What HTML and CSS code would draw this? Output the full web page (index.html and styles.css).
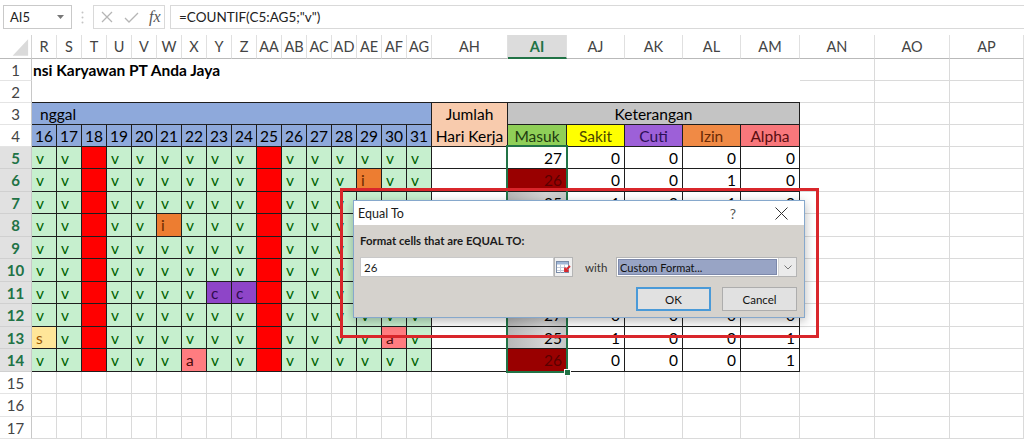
FILE: index.html
```html
<!DOCTYPE html>
<html lang="id">
<head>
<meta charset="utf-8">
<title>Absensi Karyawan PT Anda Jaya - Equal To</title>
<link rel="stylesheet" href="styles.css">
</head>
<body>
<header class="formula-bar">
  <div class="name-box"><span>AI5</span><svg width="7" height="4" viewBox="0 0 7 4"><path d="M0 0h7L3.5 4z" fill="#777"/></svg></div>
  <div class="splitter"><svg width="3" height="13" viewBox="0 0 3 13"><circle cx="1.5" cy="1.5" r="1" fill="#c4c4c4"/><circle cx="1.5" cy="6.5" r="1" fill="#c4c4c4"/><circle cx="1.5" cy="11.5" r="1" fill="#c4c4c4"/></svg></div>
  <div class="fn-box">
    <svg class="fn-x" width="12" height="12" viewBox="0 0 12 12"><path d="M1 1L11 11M11 1L1 11" stroke="#b5b5b5" stroke-width="1.3" fill="none"/></svg>
    <svg class="fn-ok" width="15" height="11" viewBox="0 0 15 11"><path d="M1 6L5 10L14 1" stroke="#b5b5b5" stroke-width="1.3" fill="none"/></svg>
    <span class="fx">fx</span>
  </div>
  <div class="formula">=COUNTIF(C5:AG5;"v")</div>
</header>

<main class="sheet">
  <div class="corner"><svg width="32" height="24" viewBox="0 0 32 24"><path d="M29 4V21H13z" fill="#dadada"/></svg></div>
  <div class="ch">R</div><div class="ch">S</div><div class="ch">T</div><div class="ch">U</div><div class="ch">V</div><div class="ch">W</div><div class="ch">X</div><div class="ch">Y</div><div class="ch">Z</div><div class="ch">AA</div><div class="ch">AB</div><div class="ch">AC</div><div class="ch">AD</div><div class="ch">AE</div><div class="ch">AF</div><div class="ch">AG</div><div class="ch">AH</div><div class="ch sel">AI</div><div class="ch">AJ</div><div class="ch">AK</div><div class="ch">AL</div><div class="ch">AM</div><div class="ch">AN</div><div class="ch">AO</div><div class="ch">AP</div>

  <div class="rh">1</div><div class="title">nsi Karyawan PT Anda Jaya</div><div class="c"></div><div class="c"></div><div class="c"></div>

  <div class="rh">2</div><div class="blank"></div><div class="c"></div><div class="c"></div><div class="c"></div>

  <div class="rh">3</div><div class="t tgl">nggal</div><div class="t jumlah"><span>Jumlah</span><span>Hari Kerja</span></div><div class="t ket">Keterangan</div><div class="c"></div><div class="c"></div><div class="c"></div>

  <div class="rh">4</div>
  <div class="t day">16</div><div class="t day">17</div><div class="t day">18</div><div class="t day">19</div><div class="t day">20</div><div class="t day">21</div><div class="t day">22</div><div class="t day">23</div><div class="t day">24</div><div class="t day">25</div><div class="t day">26</div><div class="t day">27</div><div class="t day">28</div><div class="t day">29</div><div class="t day">30</div><div class="t day">31</div>
  <div class="t hd masuk">Masuk</div><div class="t hd sakit">Sakit</div><div class="t hd cuti">Cuti</div><div class="t hd izin">Izin</div><div class="t hd alpha">Alpha</div>
  <div class="c"></div><div class="c"></div><div class="c"></div>

  <div class="rh sel">5</div>
  <div class="t v">v</div><div class="t v">v</div><div class="t r"></div><div class="t v">v</div><div class="t v">v</div><div class="t v">v</div><div class="t v">v</div><div class="t v">v</div><div class="t v">v</div><div class="t r"></div><div class="t v">v</div><div class="t v">v</div><div class="t v">v</div><div class="t v">v</div><div class="t v">v</div><div class="t v">v</div>
  <div class="t"></div><div class="t n">27</div><div class="t n">0</div><div class="t n">0</div><div class="t n">0</div><div class="t n">0</div>
  <div class="c"></div><div class="c"></div><div class="c"></div>

  <div class="rh sel">6</div>
  <div class="t v">v</div><div class="t v">v</div><div class="t r"></div><div class="t v">v</div><div class="t v">v</div><div class="t v">v</div><div class="t v">v</div><div class="t v">v</div><div class="t v">v</div><div class="t r"></div><div class="t v">v</div><div class="t v">v</div><div class="t v">v</div><div class="t o">i</div><div class="t v">v</div><div class="t v">v</div>
  <div class="t"></div><div class="t n hit">26</div><div class="t n">0</div><div class="t n">0</div><div class="t n">1</div><div class="t n">0</div>
  <div class="c"></div><div class="c"></div><div class="c"></div>

  <div class="rh sel">7</div>
  <div class="t v">v</div><div class="t v">v</div><div class="t r"></div><div class="t v">v</div><div class="t v">v</div><div class="t v">v</div><div class="t v">v</div><div class="t v">v</div><div class="t v">v</div><div class="t r"></div><div class="t v">v</div><div class="t v">v</div><div class="t v">v</div><div class="t v">v</div><div class="t v">v</div><div class="t v">v</div>
  <div class="t"></div><div class="t n tint">25</div><div class="t n">1</div><div class="t n">0</div><div class="t n">1</div><div class="t n">0</div>
  <div class="c"></div><div class="c"></div><div class="c"></div>

  <div class="rh sel">8</div>
  <div class="t v">v</div><div class="t v">v</div><div class="t r"></div><div class="t v">v</div><div class="t v">v</div><div class="t o">i</div><div class="t v">v</div><div class="t v">v</div><div class="t v">v</div><div class="t r"></div><div class="t v">v</div><div class="t v">v</div><div class="t v">v</div><div class="t v"></div><div class="t v"></div><div class="t v"></div>
  <div class="t"></div><div class="t n tint"></div><div class="t n"></div><div class="t n"></div><div class="t n"></div><div class="t n"></div>
  <div class="c"></div><div class="c"></div><div class="c"></div>

  <div class="rh sel">9</div>
  <div class="t v">v</div><div class="t v">v</div><div class="t r"></div><div class="t v">v</div><div class="t v">v</div><div class="t v">v</div><div class="t v">v</div><div class="t v">v</div><div class="t v">v</div><div class="t r"></div><div class="t v">v</div><div class="t v">v</div><div class="t v">v</div><div class="t v"></div><div class="t v"></div><div class="t v"></div>
  <div class="t"></div><div class="t n tint"></div><div class="t n"></div><div class="t n"></div><div class="t n"></div><div class="t n"></div>
  <div class="c"></div><div class="c"></div><div class="c"></div>

  <div class="rh sel">10</div>
  <div class="t v">v</div><div class="t v">v</div><div class="t r"></div><div class="t v">v</div><div class="t v">v</div><div class="t v">v</div><div class="t v">v</div><div class="t v">v</div><div class="t v">v</div><div class="t r"></div><div class="t v">v</div><div class="t v">v</div><div class="t v">v</div><div class="t v"></div><div class="t v"></div><div class="t v"></div>
  <div class="t"></div><div class="t n tint"></div><div class="t n"></div><div class="t n"></div><div class="t n"></div><div class="t n"></div>
  <div class="c"></div><div class="c"></div><div class="c"></div>

  <div class="rh sel">11</div>
  <div class="t v">v</div><div class="t v">v</div><div class="t r"></div><div class="t v">v</div><div class="t v">v</div><div class="t v">v</div><div class="t v">v</div><div class="t p">c</div><div class="t p">c</div><div class="t r"></div><div class="t v">v</div><div class="t v">v</div><div class="t v">v</div><div class="t v"></div><div class="t v"></div><div class="t v"></div>
  <div class="t"></div><div class="t n tint"></div><div class="t n"></div><div class="t n"></div><div class="t n"></div><div class="t n"></div>
  <div class="c"></div><div class="c"></div><div class="c"></div>

  <div class="rh sel">12</div>
  <div class="t v">v</div><div class="t v">v</div><div class="t r"></div><div class="t v">v</div><div class="t v">v</div><div class="t v">v</div><div class="t v">v</div><div class="t v">v</div><div class="t v">v</div><div class="t r"></div><div class="t v">v</div><div class="t v">v</div><div class="t v">v</div><div class="t v">v</div><div class="t v">v</div><div class="t v">v</div>
  <div class="t"></div><div class="t n tint">27</div><div class="t n">0</div><div class="t n">0</div><div class="t n">0</div><div class="t n">0</div>
  <div class="c"></div><div class="c"></div><div class="c"></div>

  <div class="rh sel">13</div>
  <div class="t y">s</div><div class="t v">v</div><div class="t r"></div><div class="t v">v</div><div class="t v">v</div><div class="t v">v</div><div class="t v">v</div><div class="t v">v</div><div class="t v">v</div><div class="t r"></div><div class="t v">v</div><div class="t v">v</div><div class="t v">v</div><div class="t v">v</div><div class="t a">a</div><div class="t v">v</div>
  <div class="t"></div><div class="t n tint">25</div><div class="t n">1</div><div class="t n">0</div><div class="t n">0</div><div class="t n">1</div>
  <div class="c"></div><div class="c"></div><div class="c"></div>

  <div class="rh sel">14</div>
  <div class="t v">v</div><div class="t v">v</div><div class="t r"></div><div class="t v">v</div><div class="t v">v</div><div class="t v">v</div><div class="t a">a</div><div class="t v">v</div><div class="t v">v</div><div class="t r"></div><div class="t v">v</div><div class="t v">v</div><div class="t v">v</div><div class="t v">v</div><div class="t v">v</div><div class="t v">v</div>
  <div class="t"></div><div class="t n hit">26</div><div class="t n">0</div><div class="t n">0</div><div class="t n">0</div><div class="t n">1</div>
  <div class="c"></div><div class="c"></div><div class="c"></div>

  <div class="rh">15</div>
  <div class="c"></div><div class="c"></div><div class="c"></div><div class="c"></div><div class="c"></div><div class="c"></div><div class="c"></div><div class="c"></div><div class="c"></div><div class="c"></div><div class="c"></div><div class="c"></div><div class="c"></div><div class="c"></div><div class="c"></div><div class="c"></div><div class="c"></div><div class="c"></div><div class="c"></div><div class="c"></div><div class="c"></div><div class="c"></div><div class="c"></div><div class="c"></div><div class="c"></div>

  <div class="rh">16</div>
  <div class="c"></div><div class="c"></div><div class="c"></div><div class="c"></div><div class="c"></div><div class="c"></div><div class="c"></div><div class="c"></div><div class="c"></div><div class="c"></div><div class="c"></div><div class="c"></div><div class="c"></div><div class="c"></div><div class="c"></div><div class="c"></div><div class="c"></div><div class="c"></div><div class="c"></div><div class="c"></div><div class="c"></div><div class="c"></div><div class="c"></div><div class="c"></div><div class="c"></div>

  <div class="rh">17</div>
  <div class="c"></div><div class="c"></div><div class="c"></div><div class="c"></div><div class="c"></div><div class="c"></div><div class="c"></div><div class="c"></div><div class="c"></div><div class="c"></div><div class="c"></div><div class="c"></div><div class="c"></div><div class="c"></div><div class="c"></div><div class="c"></div><div class="c"></div><div class="c"></div><div class="c"></div><div class="c"></div><div class="c"></div><div class="c"></div><div class="c"></div><div class="c"></div><div class="c"></div>
</main>

<div class="selection"></div>
<div class="fill-handle"></div>
<div class="callout"></div>

<section class="dialog">
  <div class="dlg-title">
    <span class="dlg-name">Equal To</span>
    <span class="help">?</span>
    <svg class="close" width="13" height="13" viewBox="0 0 13 13"><path d="M0.5 0.5L12.5 12.5M12.5 0.5L0.5 12.5" stroke="#333" stroke-width="1" fill="none"/></svg>
  </div>
  <div class="dlg-body">
    <div class="dlg-label">Format cells that are EQUAL TO:</div>
    <div class="dlg-row">
      <div class="dlg-input">26</div>
      <div class="range-btn"><svg width="15" height="13" viewBox="0 0 15 13"><rect x="0.5" y="0.5" width="12" height="11" fill="#fff" stroke="#7a8ca8"/><rect x="1" y="1" width="11" height="2.5" fill="#9fb6d6"/><path d="M1 6.5h11M1 9.5h11M4.5 3.5v8M8.5 3.5v8" stroke="#c2ccdb" stroke-width="1"/><path d="M14 5L9 10M9 6.5V10H12.5" stroke="#d9262b" stroke-width="1.8" fill="none"/></svg></div>
      <span class="with">with</span>
      <div class="combo">
        <div class="combo-val">Custom Format...</div>
        <div class="combo-arrow"><svg width="8" height="5" viewBox="0 0 8 5"><path d="M0.5 0.5L4 4L7.5 0.5" stroke="#777" stroke-width="1" fill="none"/></svg></div>
      </div>
    </div>
    <div class="dlg-buttons">
      <button class="btn ok">OK</button>
      <button class="btn">Cancel</button>
    </div>
  </div>
</section>
</body>
</html>
```

FILE: styles.css
```css
* { box-sizing: border-box; margin: 0; padding: 0; }
html, body { width: 1024px; height: 440px; }
body {
  position: relative;
  overflow: hidden;
  background: #fff;
  font-family: Lato, "Open Sans", sans-serif;
  color: #000;
}

/* formula bar */
.formula-bar {
  display: flex;
  align-items: stretch;
  height: 35px;
  padding: 5px 0 6px 3px;
}
.name-box {
  width: 69px;
  border: 1px solid #c9c9c9;
  display: flex;
  align-items: center;
  justify-content: space-between;
  padding: 0 7px 0 6px;
  font-size: 13px;
  color: #222;
}
.splitter {
  width: 21px;
  display: flex;
  align-items: center;
  justify-content: center;
}
.fn-box {
  width: 72px;
  border: 1px solid #d9d9d9;
  display: flex;
  align-items: center;
  padding-left: 7px;
}
.fn-x { margin-right: 11px; }
.fn-ok { margin-right: 10px; }
.fx {
  font-family: "Liberation Serif", serif;
  font-style: italic;
  font-size: 16px;
  color: #555;
}
.formula {
  flex: 1;
  margin-left: 5px;
  border: 1px solid #d9d9d9;
  border-right: 0;
  display: flex;
  align-items: center;
  padding-left: 8px;
  font-size: 13.5px;
  color: #222;
}

/* sheet grid */
.sheet {
  display: grid;
  grid-template-columns: 32px repeat(16, 25px) 76px 59px 58px 58px 58px 59px 75px 75px 74px;
  grid-template-rows: 24px 22px 22px 22px 22px 22px 23px 22px 23px 22px 23px 22px 23px 22px 23px 22px 23px 22px;
  font-size: 15.5px;
}
.sheet > div {
  display: flex;
  align-items: center;
  overflow: hidden;
  white-space: nowrap;
}
.corner {
  border-right: 1px solid #d4d4d4;
  border-bottom: 1px solid #b9b9b9;
}
.ch {
  justify-content: center;
  font-size: 14.5px;
  color: #444;
  border-right: 1px solid #e0e0e0;
  border-bottom: 1px solid #b9b9b9;
}
.ch.sel {
  background: #dcdcdc;
  color: #217346;
  font-weight: 700;
  border-bottom: 2px solid #217346;
}
.rh {
  justify-content: center;
  font-size: 15px;
  color: #444;
  border-right: 1px solid #c8c8c8;
  border-bottom: 1px solid #e4e4e4;
}
.rh.sel {
  background: #e1e1e1;
  color: #217346;
  font-weight: 700;
  border-bottom-color: #d0d0d0;
}
.c {
  border-right: 1px solid #dadada;
  border-bottom: 1px solid #dadada;
}
.title {
  grid-column: span 22;
  font-weight: 700;
  padding-left: 1px;
}
.blank {
  grid-column: span 22;
  border-bottom: 1px solid #1e1e1e;
}
.t {
  border-right: 1px solid #1e1e1e;
  border-bottom: 1px solid #1e1e1e;
}
.tgl {
  grid-column: span 16;
  background: #8ea9db;
  padding-left: 8px;
}
.sheet > .jumlah {
  grid-row: span 2;
  background: #f8cbad;
  flex-direction: column;
  justify-content: flex-start;
}
.jumlah span {
  display: block;
  height: 22px;
  line-height: 22px;
}
.ket {
  grid-column: span 5;
  background: #c4c4c4;
  justify-content: center;
}
.day {
  background: #8ea9db;
  justify-content: center;
}
.sheet > .hd { justify-content: center; }
.masuk { background: #8fcf58; color: #1e3a10; }
.sakit { background: #ffff00; color: #4a4500; }
.cuti { background: #9d60d8; color: #2c0f55; }
.izin { background: #f08a45; color: #6a2a05; }
.alpha { background: #f8777b; color: #5a0d10; }

.v { background: #c6efce; color: #006100; padding-left: 4px; }
.r { background: #ff0000; }
.o { background: #ed7d31; color: #6b2a00; padding-left: 4px; }
.p { background: #8e45c8; color: #2e0c4e; padding-left: 4px; }
.y { background: #ffe699; color: #9c5700; padding-left: 4px; }
.a { background: #ff7c80; color: #4a0a0a; padding-left: 4px; }
.sheet > .n {
  justify-content: flex-end;
  padding-right: 4px;
}
.tint { background: linear-gradient(90deg, #b8b8b8, #d4d4d4 65%, #c6c6c6); }
.hit { background: #990000; color: #5a0000; }

/* selection overlay */
.selection {
  position: absolute;
  left: 506px;
  top: 145px;
  width: 62px;
  height: 228px;
  border: 2px solid #217346;
  pointer-events: none;
}
.fill-handle {
  position: absolute;
  left: 564px;
  top: 369px;
  width: 7px;
  height: 7px;
  background: #217346;
  border: 1px solid #fff;
}

/* red annotation frame */
.callout {
  position: absolute;
  left: 340px;
  top: 188px;
  width: 479px;
  height: 150px;
  border: 3px solid #d9262b;
}

/* dialog */
.dialog {
  position: absolute;
  left: 353px;
  top: 200px;
  width: 452px;
  height: 118px;
  border: 1px solid #86a8cc;
  background: #d5d2cd;
  box-shadow: 0 3px 10px rgba(0, 0, 0, 0.28);
  display: flex;
  flex-direction: column;
  font-size: 11px;
  color: #1a1a1a;
}
.dlg-title {
  height: 24px;
  background: #fff;
  display: flex;
  align-items: center;
  padding-left: 4px;
  font-size: 12.5px;
}
.dlg-name { flex: 1; }
.help {
  font-size: 14px;
  color: #555;
  margin-right: 39px;
}
.close { margin-right: 16px; }
.dlg-body {
  padding: 8px 7px 0 6px;
}
.dlg-label {
  font-weight: 700;
  font-size: 11.4px;
  line-height: 16px;
}
.dlg-row {
  display: flex;
  align-items: stretch;
  height: 20px;
  margin-top: 8px;
}
.dlg-input {
  width: 194px;
  background: #fff;
  border: 1px solid #c9c9c9;
  display: flex;
  align-items: center;
  padding-left: 3px;
  font-size: 11.5px;
}
.range-btn {
  width: 19px;
  background: #efefef;
  border: 1px solid #b5b5b5;
  display: flex;
  align-items: center;
  justify-content: center;
}
.with {
  margin-left: 12px;
  align-self: center;
  font-size: 11.5px;
  color: #333;
}
.combo {
  margin-left: auto;
  width: 181px;
  border: 1px solid #b5b5b5;
  background: #fff;
  display: flex;
}
.combo-val {
  flex: 1;
  margin: 1px;
  background: #98a4c5;
  border: 1px solid #7d89ab;
  display: flex;
  align-items: center;
  padding-left: 1px;
  font-size: 11px;
  color: #111;
}
.combo-arrow {
  width: 18px;
  background: #ebebeb;
  border-left: 1px solid #d4d4d4;
  display: flex;
  align-items: center;
  justify-content: center;
}
.dlg-buttons {
  display: flex;
  justify-content: flex-end;
  gap: 11px;
  margin-top: 10px;
}
.btn {
  width: 75px;
  height: 24px;
  background: #e1e1e1;
  border: 1px solid #adadad;
  font-family: Lato, "Open Sans", sans-serif;
  font-size: 11.5px;
  color: #111;
}
.btn.ok {
  border: 2px solid #4a9ad8;
}
```
